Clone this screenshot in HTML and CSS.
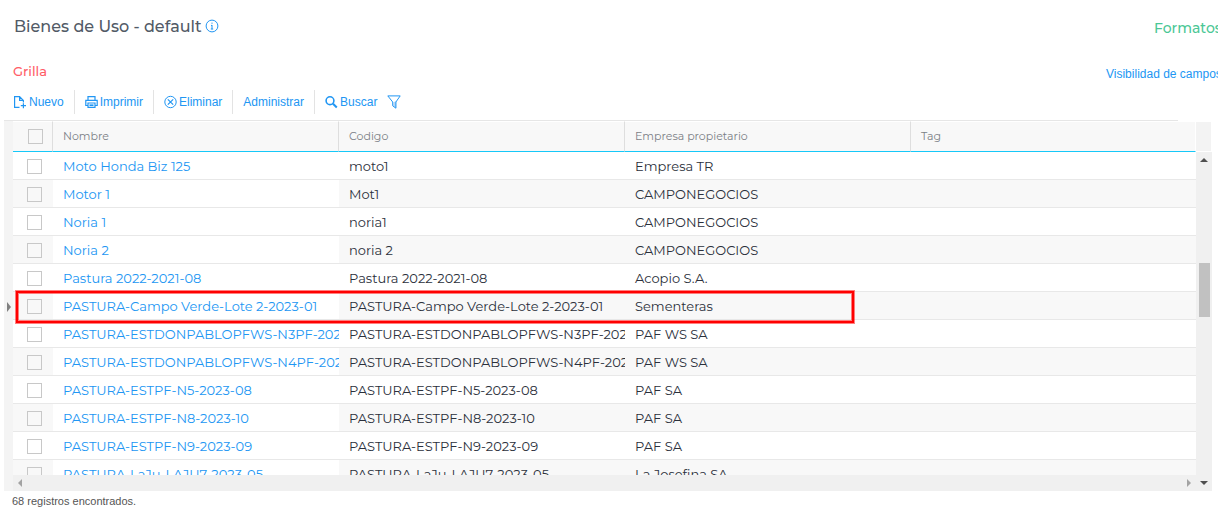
FILE: index.html
```
<!DOCTYPE html>
<html lang="es">
<head>
    <meta charset="UTF-8">
    <meta name="viewport" content="width=device-width, initial-scale=1.0">
    <title>Bienes de Uso</title>
    <link rel="stylesheet" href="styles.css">
</head>
<body>
    <header class="page-header">
        <h1>Bienes de Uso - default</h1>
        <a href="#" class="info" aria-label="Información">
            <svg width="14" height="14" viewBox="0 0 14 14" fill="none" stroke="currentColor">
                <circle cx="7" cy="7" r="5.9"/>
                <path d="M7 6v4.2M7 3.6v1.2M6 6.4h1M5.8 10h2.4"/>
            </svg>
        </a>
        <a href="#" class="formats">Formatos</a>
    </header>

    <div class="section-header">
        <h2>Grilla</h2>
        <a href="#" class="visibility">Visibilidad de campos</a>
    </div>

    <div class="toolbar">
        <button type="button">
            <svg width="14" height="14" viewBox="0 0 14 14" fill="none" stroke="currentColor" stroke-width="1.2">
                <path d="M5.5 12.4H.6V1.6h5l3.8 3.8v2M5.6 1.6v3.8h3.8M9.4 8.2v5M6.8 10.7H12"/>
            </svg>
            Nuevo
        </button>
        <button type="button">
            <svg width="14" height="14" viewBox="0 0 14 14" fill="none" stroke="currentColor" stroke-width="1.2">
                <path d="M3 5V1.6h7V5M3 10.5H.8V5.3h11.4v5.2H10"/>
                <path d="M3 8h7v4.4H3z"/>
                <path d="M4.5 10.2h4" stroke-width="1.6"/>
            </svg>
            Imprimir
        </button>
        <button type="button">
            <svg width="14" height="14" viewBox="0 0 14 14" fill="none" stroke="currentColor">
                <circle cx="6.5" cy="7" r="5.7"/>
                <path d="M3.8 4.3l5.4 5.4M9.2 4.3L3.8 9.7" stroke-width="1.2"/>
            </svg>
            Eliminar
        </button>
        <button type="button">Administrar</button>
        <button type="button">
            <svg width="14" height="14" viewBox="0 0 14 14" fill="none" stroke="currentColor">
                <circle cx="5" cy="5.7" r="3.9" stroke-width="1.6"/>
                <path d="M8 8.7l3.8 3.8" stroke-width="2"/>
            </svg>
            Buscar
        </button>
        <button type="button" class="filter" aria-label="Filtrar">
            <svg width="14" height="14" viewBox="0 0 14 14" fill="none" stroke="currentColor">
                <path d="M6.5 7.2L9.2 6v7L6.3 10.9z" fill="#b5d8f8" stroke="none"/>
                <path d="M.8.9h12.4L8.9 7v6.2L5.7 10.8V7z"/>
            </svg>
        </button>
    </div>

    <main class="grid">
        <div class="gutter"><span class="marker"></span></div>
        <div class="viewport">
            <table>
                <colgroup>
                    <col class="col-check">
                    <col class="col-data">
                    <col class="col-data">
                    <col class="col-data">
                    <col>
                </colgroup>
                <thead>
                    <tr>
                        <th><input type="checkbox" aria-label="Seleccionar todos"></th>
                        <th>Nombre</th>
                        <th>Codigo</th>
                        <th>Empresa propietario</th>
                        <th>Tag</th>
                    </tr>
                </thead>
                <tbody>
                    <tr>
                        <td><input type="checkbox" aria-label="Moto Honda Biz 125"></td>
                        <td><a href="#">Moto Honda Biz 125</a></td>
                        <td>moto1</td>
                        <td>Empresa TR</td>
                        <td></td>
                    </tr>
                    <tr>
                        <td><input type="checkbox" aria-label="Motor 1"></td>
                        <td><a href="#">Motor 1</a></td>
                        <td>Mot1</td>
                        <td>CAMPONEGOCIOS</td>
                        <td></td>
                    </tr>
                    <tr>
                        <td><input type="checkbox" aria-label="Noria 1"></td>
                        <td><a href="#">Noria 1</a></td>
                        <td>noria1</td>
                        <td>CAMPONEGOCIOS</td>
                        <td></td>
                    </tr>
                    <tr>
                        <td><input type="checkbox" aria-label="Noria 2"></td>
                        <td><a href="#">Noria 2</a></td>
                        <td>noria 2</td>
                        <td>CAMPONEGOCIOS</td>
                        <td></td>
                    </tr>
                    <tr>
                        <td><input type="checkbox" aria-label="Pastura 2022-2021-08"></td>
                        <td><a href="#">Pastura 2022-2021-08</a></td>
                        <td>Pastura 2022-2021-08</td>
                        <td>Acopio S.A.</td>
                        <td></td>
                    </tr>
                    <tr>
                        <td><input type="checkbox" aria-label="PASTURA-Campo Verde-Lote 2-2023-01"></td>
                        <td><a href="#">PASTURA-Campo Verde-Lote 2-2023-01</a></td>
                        <td>PASTURA-Campo Verde-Lote 2-2023-01</td>
                        <td>Sementeras</td>
                        <td></td>
                    </tr>
                    <tr>
                        <td><input type="checkbox" aria-label="PASTURA-ESTDONPABLOPFWS-N3PF-2023"></td>
                        <td><a href="#">PASTURA-ESTDONPABLOPFWS-N3PF-2023</a></td>
                        <td>PASTURA-ESTDONPABLOPFWS-N3PF-2023</td>
                        <td>PAF WS SA</td>
                        <td></td>
                    </tr>
                    <tr>
                        <td><input type="checkbox" aria-label="PASTURA-ESTDONPABLOPFWS-N4PF-2023"></td>
                        <td><a href="#">PASTURA-ESTDONPABLOPFWS-N4PF-2023</a></td>
                        <td>PASTURA-ESTDONPABLOPFWS-N4PF-2023</td>
                        <td>PAF WS SA</td>
                        <td></td>
                    </tr>
                    <tr>
                        <td><input type="checkbox" aria-label="PASTURA-ESTPF-N5-2023-08"></td>
                        <td><a href="#">PASTURA-ESTPF-N5-2023-08</a></td>
                        <td>PASTURA-ESTPF-N5-2023-08</td>
                        <td>PAF SA</td>
                        <td></td>
                    </tr>
                    <tr>
                        <td><input type="checkbox" aria-label="PASTURA-ESTPF-N8-2023-10"></td>
                        <td><a href="#">PASTURA-ESTPF-N8-2023-10</a></td>
                        <td>PASTURA-ESTPF-N8-2023-10</td>
                        <td>PAF SA</td>
                        <td></td>
                    </tr>
                    <tr>
                        <td><input type="checkbox" aria-label="PASTURA-ESTPF-N9-2023-09"></td>
                        <td><a href="#">PASTURA-ESTPF-N9-2023-09</a></td>
                        <td>PASTURA-ESTPF-N9-2023-09</td>
                        <td>PAF SA</td>
                        <td></td>
                    </tr>
                    <tr>
                        <td><input type="checkbox" aria-label="PASTURA-LaJu-LAJU7-2023-05"></td>
                        <td><a href="#">PASTURA-LaJu-LAJU7-2023-05</a></td>
                        <td>PASTURA-LaJu-LAJU7-2023-05</td>
                        <td>La Josefina SA</td>
                        <td></td>
                    </tr>
                </tbody>
            </table>
            <div class="highlight"></div>
        </div>
        <div class="scroll-y">
            <div class="corner"></div>
            <span class="arrow up"></span>
            <div class="track"><div class="thumb"></div></div>
        </div>
        <div class="scroll-x">
            <span class="arrow left"></span>
            <span class="arrow right"></span>
        </div>
        <div class="scroll-end"><span class="arrow down"></span></div>
    </main>

    <footer>68 registros encontrados.</footer>
</body>
</html>
```

FILE: styles.css
```
* {
    box-sizing: border-box;
}

body {
    margin: 0;
    background-color: #fff;
    font-family: "Liberation Sans", Arial, sans-serif;
    font-size: 12px;
    overflow: hidden;
}

a {
    color: #2196f3;
    text-decoration: none;
}

h1, h2, .formats, table {
    font-family: Montserrat, Inter, sans-serif;
}

h1, h2 {
    margin: 0;
    font-weight: 500;
}

svg {
    display: block;
}

/* Header */
.page-header {
    display: flex;
    align-items: center;
    height: 52px;
    padding-left: 14px;
}

h1 {
    font-size: 16px;
    color: #525a66;
}

.info {
    margin-left: 3px;
}

.formats {
    width: 64px;
    margin-left: auto;
    padding-top: 4px;
    font-size: 14px;
    font-weight: 500;
    color: #4bc796;
    white-space: nowrap;
}

.section-header {
    display: flex;
    align-items: center;
    justify-content: space-between;
    height: 38px;
    padding-left: 13px;
}

h2 {
    font-size: 13px;
    color: #ff5d68;
}

.visibility {
    width: 112px;
    padding-top: 6px;
    white-space: nowrap;
}

/* Toolbar */
.toolbar {
    display: flex;
    height: 31px;
    margin: 0 40px 0 4px;
    padding-bottom: 6px;
    border-bottom: 1px solid #e6e6e6;
}

.toolbar button {
    display: flex;
    align-items: center;
    gap: 1px;
    padding: 0 10px;
    border: 0;
    border-right: 1px solid #e3e3e3;
    background: none;
    color: #2196f3;
    font: inherit;
}

.toolbar button:nth-last-child(-n+2) {
    border-right: 0;
}

.toolbar .filter {
    padding: 0;
}

/* Grid */
.grid {
    display: grid;
    grid-template-columns: 9px 1fr 16px;
    grid-template-rows: 354px 16px;
    margin: 0 6px 0 4px;
}

.gutter {
    grid-row: 1 / 3;
    padding: 181px 0 0 3px;
    background-color: #f4f4f4;
}

.marker {
    display: block;
    border-left: 4px solid #808080;
    border-top: 5px solid transparent;
    border-bottom: 5px solid transparent;
    width: 0;
}

.viewport {
    position: relative;
    overflow: hidden;
}

table {
    width: 100%;
    border-collapse: separate;
    border-spacing: 0;
    table-layout: fixed;
    font-size: 13px;
    color: #2b303b;
}

.col-check {
    width: 40px;
}

.col-data {
    width: 286px;
}

th, td {
    padding: 0 0 0 10px;
    overflow: hidden;
    text-align: left;
    white-space: nowrap;
}

th {
    height: 31px;
    padding-bottom: 2px;
    border-top: 1px solid #fff;
    border-bottom: 1px solid #16c8f8;
    border-right: 1px solid #dedede;
    background-color: #f8f8f8;
    font-size: 11px;
    font-weight: 400;
    color: #7b7f86;
}

th:last-child {
    border-right-color: #fff;
}

th:first-child {
    padding: 0 0 0 15px;
}

td {
    height: 28px;
    border-bottom: 1px solid #e8e8e8;
}

td:first-child {
    padding: 2px 0 0 14px;
}

tbody tr:nth-child(even) td {
    background-color: #f8f8f8;
}

tbody tr:nth-child(even) td:nth-child(2) {
    background-color: #fff;
}

input[type="checkbox"] {
    display: block;
    width: 15px;
    height: 15px;
    margin: 0;
    border: 1px solid #c8c8c8;
    appearance: none;
}

.highlight {
    position: absolute;
    top: 170px;
    left: 3px;
    width: 838px;
    height: 32px;
    border: 2px solid #f00;
    box-shadow: 0 0 0 1px #ff000080, inset 0 0 0 1px #ff000080;
    pointer-events: none;
}

/* Scrollbars */
.scroll-y, .scroll-x, .scroll-end {
    background-color: #f0f0f0;
}

.scroll-y {
    display: flex;
    flex-direction: column;
    align-items: center;
}

.corner {
    align-self: stretch;
    height: 31px;
    border: 1px solid #fff;
    border-left: 0;
    background-color: #f3f3f3;
}

.track {
    flex: 1;
    padding-top: 101px;
}

.thumb {
    width: 11px;
    height: 54px;
    background-color: #c1c1c1;
}

.scroll-x {
    display: flex;
    align-items: center;
    justify-content: space-between;
    padding: 0 5px;
}

.scroll-end {
    display: flex;
    align-items: center;
    justify-content: center;
}

.arrow {
    width: 0;
    height: 0;
    border: 4px solid transparent;
}

.up {
    margin-top: 6px;
    border-top: 0;
    border-bottom-color: #505050;
}

.down {
    border-bottom: 0;
    border-top-color: #505050;
}

.left {
    border-left: 0;
    border-right-color: #a3a3a3;
}

.right {
    border-right: 0;
    border-left-color: #a3a3a3;
}

footer {
    padding: 4px 12px;
    font-size: 11px;
    color: #555;
}
```
